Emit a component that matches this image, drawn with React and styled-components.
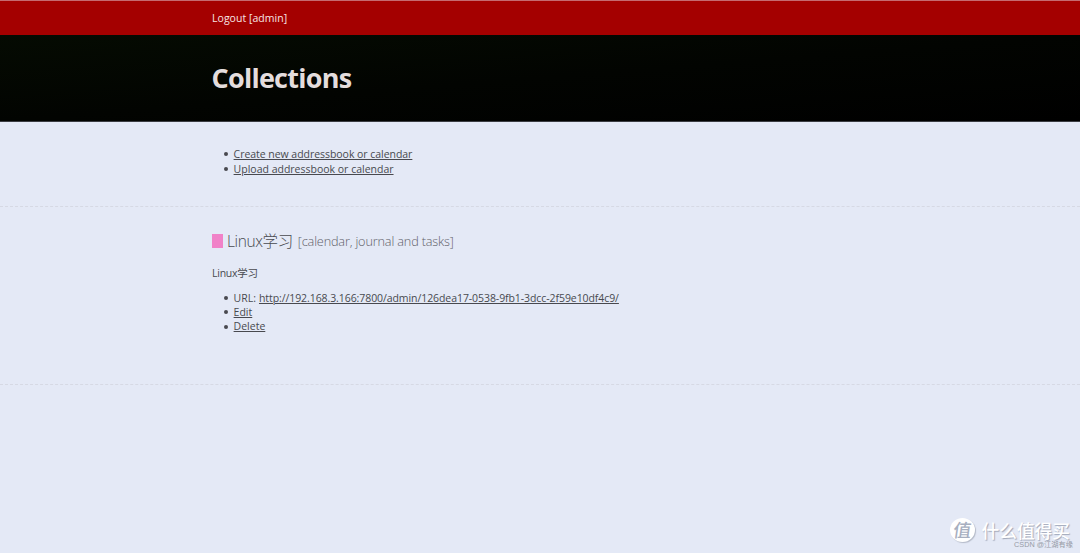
import React from "react";
import styled, { createGlobalStyle } from "styled-components";

const GlobalStyle = createGlobalStyle`
  body {
    margin: 0;
    background: #e4e9f6;
    color: #48494f;
    font-family: "Open Sans", "Noto Sans", "Noto Sans CJK SC", sans-serif;
    font-size: 10.5px;
    line-height: 14.4px;
  }
`
const Page = styled.div`
  min-height: 553px;
  overflow: hidden;
`
const Nav = styled.nav`
  box-sizing: border-box;
  height: 35px;
  padding: 10px 212px 0;
  border-top: 1px solid #c56a70;
  background: #a40000;
`
const Logout = styled.a`
  color: #f6e4e4;
  letter-spacing: 0.04px;
`
const Header = styled.header`
  box-sizing: border-box;
  height: 87px;
  padding: 22px 211.5px 0;
  border-bottom: 1px solid #3b3d43;
  background: linear-gradient(to bottom right, #050b02, #020401 50%, #000);
`
const Title = styled.h1`
  margin: 0;
  color: #e4dddd;
  font-size: 27px;
  font-weight: 700;
  line-height: 42px;
  letter-spacing: -0.75px;
`
const Section = styled.section`
  box-sizing: border-box;
  height: ${(p) => p.$height};
  padding: 25px 212px 0;
  border-bottom: 1px dashed #d6d9e4;
`
const List = styled.ul`
  margin: 0;
  padding: ${(p) => p.$top || "0"} 0 0 21.6px;
  list-style: none;
`
const Item = styled.li`
  display: flex;
  align-items: center;
  height: 14.4px;
  white-space: nowrap;

  &:before {
    content: '';
    width: 4px;
    height: 4px;
    margin: 0 6px 0 -10px;
    border-radius: 50%;
    background: #48494f;
  }
`
const Link = styled.a`
  color: #48494f;
  text-decoration: underline;
  text-underline-offset: 1px;
  letter-spacing: ${(p) => p.$spacing || "0"};
`
const Label = styled.span`
  margin-right: 3px;
`
const Heading = styled.h2`
  display: flex;
  align-items: center;
  height: 20px;
  margin: -1px 0 0;
  font-size: 15.5px;
  font-weight: 300;
  white-space: nowrap;
`
const Swatch = styled.span`
  width: 11px;
  height: 14px;
  margin-right: 4px;
  background: #f082c8;
`
const Name = styled.span`
  letter-spacing: -0.38px;
`
const Kind = styled.small`
  margin-left: 5px;
  color: #5f6068;
  font-size: 12.7px;
  letter-spacing: -0.16px;
`
const Description = styled.p`
  margin: 15px 0 10px;
  letter-spacing: -0.25px;
`
const Watermark = styled.div`
  position: absolute;
  right: 10px;
  top: 518px;
  display: flex;
  align-items: center;
  gap: 7px;
  color: #fff;
  font-family: "Noto Sans CJK SC", sans-serif;
  font-size: 17.7px;
  font-weight: 500;
  line-height: 24px;
  text-shadow: 1px 1px 1px #a0a7b8;
`
const Badge = styled.span`
  width: 25px;
  height: 24px;
  border-radius: 50%;
  background: #fff;
  box-shadow: 1px 1px 1px #b4bac8;
  color: #a7afc0;
  font-size: 18px;
  font-weight: 500;
  line-height: 22px;
  text-align: center;
  text-shadow: none;
`
const Glyph = styled.span`
  display: block;
  transform: skewX(-8deg);
`
const Credit = styled.div`
  position: absolute;
  right: 7px;
  top: 541px;
  color: #969aa5;
  font-family: "Liberation Sans", "Noto Sans CJK SC", sans-serif;
  font-size: 7.25px;
  line-height: 8px;
`

export default function App() {
  return (
    <Page>
      <GlobalStyle />
      <Nav>
        <Logout>Logout [admin]</Logout>
      </Nav>
      <Header>
        <Title>Collections</Title>
      </Header>
      <Section $height="85px">
        <List $top="0.3px">
          <Item><Link $spacing="-0.04px">Create new addressbook or calendar</Link></Item>
          <Item><Link>Upload addressbook or calendar</Link></Item>
        </List>
      </Section>
      <Section $height="178px">
        <Heading>
          <Swatch />
          <Name>Linux学习</Name>
          <Kind>[calendar, journal and tasks]</Kind>
        </Heading>
        <Description>Linux学习</Description>
        <List $top="0.2px">
          <Item>
            <Label>URL:</Label>
            <Link $spacing="-0.075px">http://192.168.3.166:7800/admin/126dea17-0538-9fb1-3dcc-2f59e10df4c9/</Link>
          </Item>
          <Item><Link>Edit</Link></Item>
          <Item><Link>Delete</Link></Item>
        </List>
      </Section>
      <Watermark>
        <Badge><Glyph>值</Glyph></Badge>
        <span>什么值得买</span>
      </Watermark>
      <Credit>CSDN @江湖有缘</Credit>
    </Page>
  )
}
